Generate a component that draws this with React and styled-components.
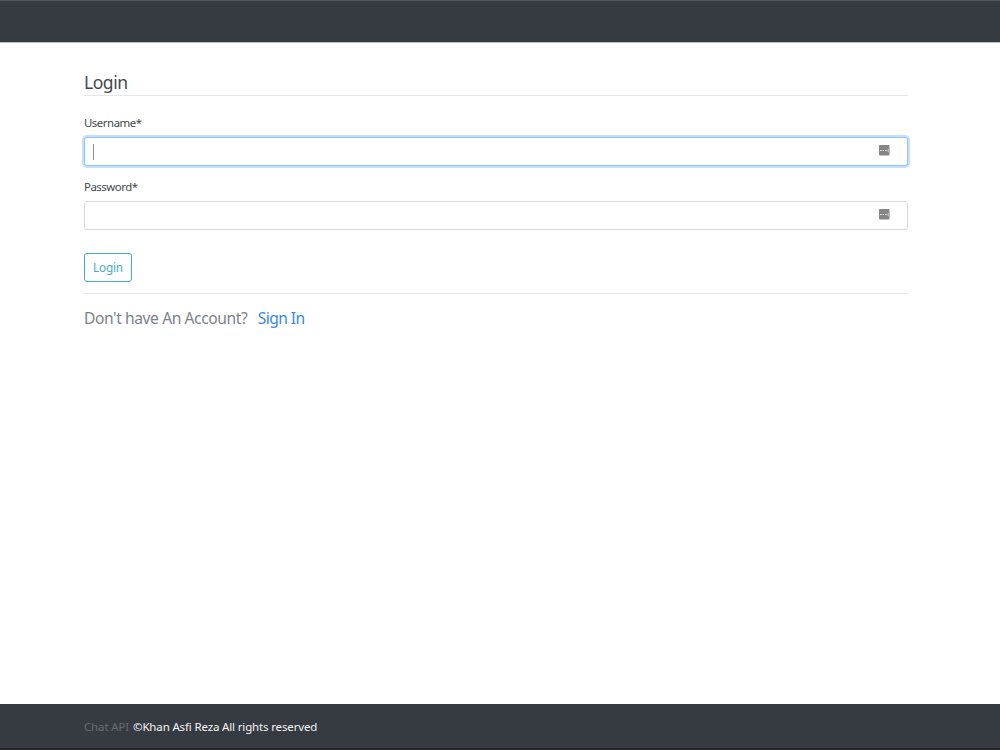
import React from "react";
import styled, { createGlobalStyle } from "styled-components";

const GlobalStyle = createGlobalStyle`
  *, *::before, *::after { box-sizing: border-box; }
  body {
    margin: 0;
    background: #fff;
    color: #42484d;
    font-family: "Noto Sans", "Open Sans", sans-serif;
    font-size: 11.5px;
  }
`;

const Page = styled.div`
  display: flex;
  flex-direction: column;
  height: 100vh;
  overflow: hidden;
`;

const Navbar = styled.header`
  flex: none;
  height: 43px;
  background: #363b42;
  border-top: 1px solid #50575c;
  border-bottom: 1px solid #b9bcbf;
`;

const Main = styled.main`
  flex: 1;
  padding: 29px 92px 0 84px;
`;

const Legend = styled.h1`
  margin: 0 0 18px;
  height: 24px;
  border-bottom: 1px solid #e4e7e9;
  font-size: 17.5px;
  font-weight: 400;
  line-height: 20px;
  letter-spacing: -0.45px;
`;

const Field = styled.label`
  display: block;
  margin-bottom: 12px;
`;

const LabelText = styled.span`
  display: block;
  height: 18px;
  margin-bottom: 5px;
  font-size: 11.4px;
  line-height: 18px;
  letter-spacing: -0.46px;
`;

const InputBox = styled.span`
  display: flex;
  align-items: center;
  justify-content: space-between;
  height: 29px;
  width: 824px;
  padding: 0 17px 3px 9px;
  background: #fff;
  border: 1px solid ${(p) => (p.$focused ? "#8fc4f6" : "#d5d9dc")};
  border-radius: 3px;
  box-shadow: ${(p) => (p.$focused ? "0 0 0 2px #c3dffb" : "none")};
`;

const Caret = styled.span`
  width: 1px;
  height: 16px;
  margin-top: 3px;
  margin-left: -1px;
  background: ${(p) => (p.$visible ? "#8a8e91" : "transparent")};
`;

const LoginButton = styled.button`
  display: block;
  width: 48px;
  height: 29px;
  margin: 23px 0 11px;
  padding: 0;
  border: 1px solid #48aebd;
  border-radius: 3px;
  background: #fff;
  color: #48aebd;
  font: inherit;
  font-size: 11.8px;
  line-height: 27px;
  letter-spacing: -0.2px;
`;

const Prompt = styled.p`
  display: flex;
  gap: 10.5px;
  margin: 0;
  padding-top: 13px;
  border-top: 1px solid #e4e7e9;
  color: #7b8287;
  font-size: 15.6px;
  line-height: 22px;
  letter-spacing: -0.41px;
`;

const Link = styled.a`
  color: #3988e3;
  letter-spacing: -0.6px;
  text-decoration: none;
`;

const Footer = styled.footer`
  flex: none;
  display: flex;
  gap: 4px;
  height: 46px;
  padding-left: 84px;
  background: #363b42;
  border-bottom: 2px solid #24262c;
  color: #f2f3f4;
  line-height: 45px;
  letter-spacing: -0.15px;
  white-space: nowrap;
`;

const Brand = styled.span`
  color: #656b71;
`;

function KeyIcon() {
  return (
    <svg width="11" height="11" viewBox="0 0 11 11" aria-hidden="true">
      <rect width="10.5" height="10.5" rx="1" fill="#858585" />
      <path d="M7.5 5.5 10.5 2.8V8.2Z" fill="#b5b5b5" />
      <path d="M1.2 5.5h1.5M3.6 5.5h1.5M6 5.5h1.5" stroke="#ededed" strokeWidth="1.2" />
    </svg>
  );
}

function FormField({ label, focused }) {
  return (
    <Field>
      <LabelText>{label}</LabelText>
      <InputBox $focused={focused}>
        <Caret $visible={focused} />
        <KeyIcon />
      </InputBox>
    </Field>
  );
}

export default function App() {
  return (
    <Page>
      <GlobalStyle />
      <Navbar />
      <Main>
        <Legend>Login</Legend>
        <FormField label="Username*" focused />
        <FormField label="Password*" />
        <LoginButton type="button">Login</LoginButton>
        <Prompt>
          <span>Don't have An Account?</span>
          <Link href="#">Sign In</Link>
        </Prompt>
      </Main>
      <Footer>
        <Brand>Chat API</Brand>
        <span>©Khan Asfi Reza All rights reserved</span>
      </Footer>
    </Page>
  );
}
